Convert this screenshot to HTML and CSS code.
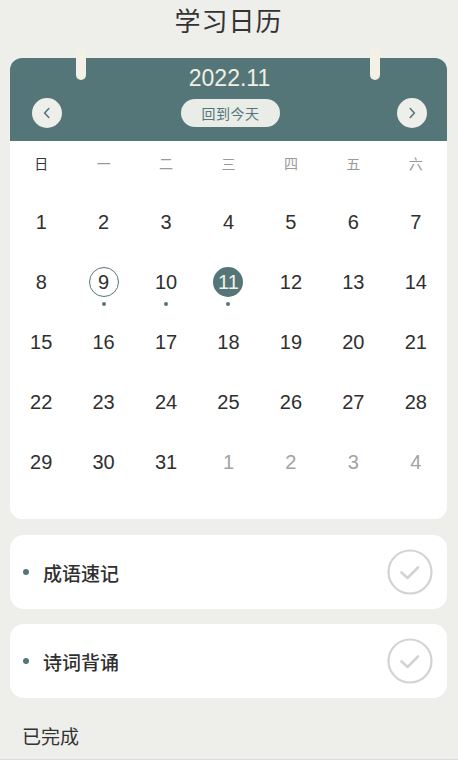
FILE: index.html
```html
<!DOCTYPE html>
<html lang="zh">
<head>
<meta charset="utf-8">
<title>学习日历</title>
<link rel="stylesheet" href="styles.css">
</head>
<body>
<div class="page">
  <h1 class="title">学习日历</h1>
  <div class="calendar">
    <span class="ring ring-left"></span>
    <span class="ring ring-right"></span>
    <div class="cal-head">
      <div class="month">2022.11</div>
      <div class="nav">
        <button class="nav-btn"><svg width="14" height="14" viewBox="0 0 14 14"><path d="M8.8 2.5 L4.6 7 L8.8 11.5" fill="none" stroke="#557679" stroke-width="1.6" stroke-linecap="round" stroke-linejoin="round"/></svg></button>
        <button class="today">回到今天</button>
        <button class="nav-btn"><svg width="14" height="14" viewBox="0 0 14 14"><path d="M5.2 2.5 L9.4 7 L5.2 11.5" fill="none" stroke="#557679" stroke-width="1.6" stroke-linecap="round" stroke-linejoin="round"/></svg></button>
      </div>
    </div>
    <div class="weekdays">
      <span class="wd-sun">日</span><span>一</span><span>二</span><span>三</span><span>四</span><span>五</span><span>六</span>
    </div>
    <div class="days">
      <div class="day"><span class="num">1</span></div>
      <div class="day"><span class="num">2</span></div>
      <div class="day"><span class="num">3</span></div>
      <div class="day"><span class="num">4</span></div>
      <div class="day"><span class="num">5</span></div>
      <div class="day"><span class="num">6</span></div>
      <div class="day"><span class="num">7</span></div>
      <div class="day"><span class="num">8</span></div>
      <div class="day"><span class="num ring-day">9</span><i class="dot"></i></div>
      <div class="day"><span class="num">10</span><i class="dot"></i></div>
      <div class="day"><span class="num today-day">11</span><i class="dot"></i></div>
      <div class="day"><span class="num">12</span></div>
      <div class="day"><span class="num">13</span></div>
      <div class="day"><span class="num">14</span></div>
      <div class="day"><span class="num">15</span></div>
      <div class="day"><span class="num">16</span></div>
      <div class="day"><span class="num">17</span></div>
      <div class="day"><span class="num">18</span></div>
      <div class="day"><span class="num">19</span></div>
      <div class="day"><span class="num">20</span></div>
      <div class="day"><span class="num">21</span></div>
      <div class="day"><span class="num">22</span></div>
      <div class="day"><span class="num">23</span></div>
      <div class="day"><span class="num">24</span></div>
      <div class="day"><span class="num">25</span></div>
      <div class="day"><span class="num">26</span></div>
      <div class="day"><span class="num">27</span></div>
      <div class="day"><span class="num">28</span></div>
      <div class="day"><span class="num">29</span></div>
      <div class="day"><span class="num">30</span></div>
      <div class="day"><span class="num">31</span></div>
      <div class="day other"><span class="num">1</span></div>
      <div class="day other"><span class="num">2</span></div>
      <div class="day other"><span class="num">3</span></div>
      <div class="day other"><span class="num">4</span></div>
    </div>
  </div>

  <div class="task">
    <i class="task-dot"></i><span class="task-name">成语速记</span>
    <svg class="check" width="46" height="46" viewBox="0 0 46 46"><circle cx="23" cy="23" r="21.5" fill="none" stroke="#d3d3d3" stroke-width="2.2"/><path d="M14.5 23.5 L20.5 29 L31 18.5" fill="none" stroke="#d3d3d3" stroke-width="2.6" stroke-linecap="round" stroke-linejoin="round"/></svg>
  </div>
  <div class="task">
    <i class="task-dot"></i><span class="task-name">诗词背诵</span>
    <svg class="check" width="46" height="46" viewBox="0 0 46 46"><circle cx="23" cy="23" r="21.5" fill="none" stroke="#d3d3d3" stroke-width="2.2"/><path d="M14.5 23.5 L20.5 29 L31 18.5" fill="none" stroke="#d3d3d3" stroke-width="2.6" stroke-linecap="round" stroke-linejoin="round"/></svg>
  </div>
  <div class="done-label">已完成</div>
</div>
</body>
</html>
```
FILE: styles.css
```css
* { box-sizing: border-box; }
html, body {
  margin: 0;
  padding: 0;
  background: #ffffff;
  font-family: "Liberation Sans", "Noto Sans CJK SC", sans-serif;
  color: #333333;
}
.page {
  background: #eeeeea;
  height: 760px;
  border-bottom: 1px solid #dcdcd8;
  padding: 0 11px 0 10px;
  display: flex;
  flex-direction: column;
}
.title {
  margin: 0;
  font-family: "Noto Sans CJK SC", sans-serif;
  font-size: 26px;
  font-weight: 400;
  line-height: 40px;
  text-align: center;
  letter-spacing: 1px;
  color: #333;
  margin-bottom: 18px;
}
.calendar {
  position: relative;
  background: #ffffff;
  border-radius: 12px;
  padding-bottom: 27px;
}
.ring {
  position: absolute;
  top: -10px;
  width: 10px;
  height: 32px;
  border-radius: 5px;
  background: #f3f1e5;
}
.ring-left { left: 66px; }
.ring-right { left: 360px; }
.cal-head {
  background: #557679;
  border-radius: 12px 12px 0 0;
  padding: 7px 20px 13px 22px;
  display: flex;
  flex-direction: column;
  gap: 7px;
}
.month {
  text-align: center;
  font-size: 23px;
  line-height: 26px;
  color: #f1efe4;
}
.nav {
  display: flex;
  align-items: center;
  justify-content: space-between;
  height: 30px;
}
.nav-btn {
  width: 30px;
  height: 30px;
  border-radius: 50%;
  border: none;
  background: #eeeeea;
  padding: 0;
  display: flex;
  align-items: center;
  justify-content: center;
}
.today {
  width: 99px;
  height: 28px;
  border: none;
  border-radius: 14px;
  background: #e9ece7;
  color: #557679;
  font-family: "Noto Sans CJK SC", sans-serif;
  font-size: 14px;
  padding: 0;
  letter-spacing: 0.5px;
  margin-left: 2px;
}
.weekdays {
  display: grid;
  grid-template-columns: repeat(7, 1fr);
  height: 51px;
  padding-top: 11px;
  line-height: 22px;
  text-align: center;
  font-family: "Noto Sans CJK SC", sans-serif;
  font-size: 14px;
  color: #9a9a9a;
}
.weekdays .wd-sun { color: #333; }
.days {
  display: grid;
  grid-template-columns: repeat(7, 1fr);
  grid-auto-rows: 60px;
}
.day {
  position: relative;
  display: flex;
  align-items: center;
  justify-content: center;
  font-size: 20px;
  color: #2f2f2f;
}
.day.other { color: #a3a3a3; }
.num {
  width: 30px;
  height: 30px;
  line-height: 30px;
  text-align: center;
  border-radius: 50%;
  white-space: nowrap;
  display: flex;
  align-items: center;
  justify-content: center;
}
.ring-day {
  border: 1.3px solid #557679;
}
.today-day {
  background: #557679;
  color: #f3f1e6;
}
.dot {
  position: absolute;
  left: 50%;
  top: 50px;
  width: 4px;
  height: 4px;
  margin-left: -2px;
  border-radius: 50%;
  background: #557679;
}
.task {
  margin-top: 16px;
  height: 74px;
  background: #ffffff;
  border-radius: 14px;
  display: flex;
  align-items: center;
  padding: 0 14px 0 13px;
}
.task + .task { margin-top: 15px; }
.task-dot {
  width: 6px;
  height: 6px;
  border-radius: 50%;
  background: #557679;
  margin-right: 14px;
}
.task-name {
  flex: 1;
  font-family: "Noto Sans CJK SC", sans-serif;
  font-size: 19px;
  font-weight: 500;
  color: #2f2f2f;
}
.check { display: block; }
.done-label {
  margin-top: 23px;
  padding-left: 12px;
  font-family: "Noto Sans CJK SC", sans-serif;
  font-size: 19px;
  line-height: 30px;
  color: #333;
}
```
